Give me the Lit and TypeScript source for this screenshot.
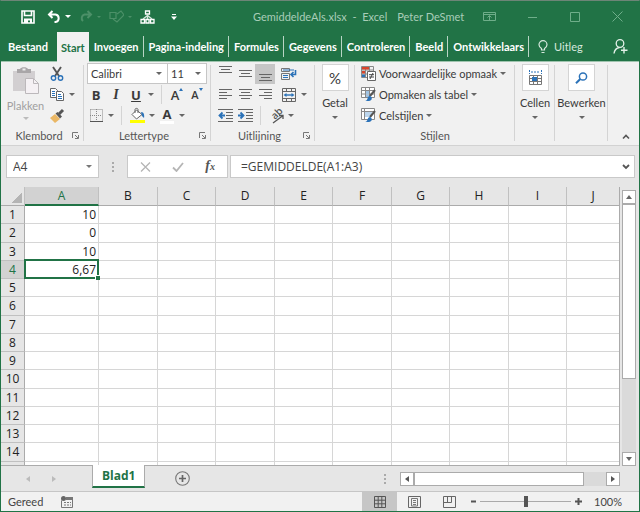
import { LitElement, html, svg, css, nothing, type TemplateResult } from "lit";
import { customElement, property } from "lit/decorators.js";
import { classMap } from "lit/directives/class-map.js";

const icon = (w: number, h: number, body: unknown) =>
  html`<svg width=${w} height=${h} viewBox="0 0 ${w} ${h}" fill="none" aria-hidden="true">${body}</svg>`;

const G = "#666";
const BLUE = "#2b72b8";

const icons = {
  save: icon(14, 14, svg`<path d="M1 1h12v12H1z M3.5 1v4.5h7V1" stroke="#fff" stroke-width="1.6"/><path d="M3 8.5h8V13H9V10.5H7V13H3z" fill="#fff"/>`),
  undo: icon(14, 14, svg`<path d="M5.5 1 2 4.5 5.500 8M2 4.500H8.500A3.800 3.800 0 0 1 8.500 12H7.500" stroke="#fff" stroke-width="2"/>`),
  redo: icon(14, 14, svg`<path d="M8.5 1 12 4.5 8.500 8M12 4.500H5.500A3.800 3.800 0 0 0 4 11" stroke="#4c9068" stroke-width="2"/>`),
  shapes: icon(15, 14, svg`<path d="M1 2.500h6v6H1zM8 4l4-3 3 4-7 7-4-3" stroke="#4c9068" stroke-width="1.200"/>`),
  tree: icon(15, 14, svg`<path d="M5.500 1h4v3h-4zM1 9.500h3.500V13H1zM6 9.500h3V13H6zM10.500 9.500H14V13h-3.500z" stroke="#fff" stroke-width="1.300"/><path d="M7.500 4v5M7.500 5.500 3 9M7.500 5.500 12 9" stroke="#d5e6dc" stroke-width="1.400"/>`),
  custom: icon(6, 8, svg`<path d="M1 1.500h4" stroke="#fff"/><path d="M0 3.500h6L3 7z" fill="#fff"/>`),
  ribbonMode: icon(13, 11, svg`<path d="M.5 1.500h12v8H.5zM.5 3.500h12M6.500 9V5M4.500 6.500l2-2 2 2" stroke="#6fae8a"/>`),
  min: icon(10, 10, svg`<path d="M0 5.500h9" stroke="#6fae8a"/>`),
  max: icon(10, 10, svg`<path d="M.5.5h9v9h-9z" stroke="#6fae8a"/>`),
  close: icon(11, 11, svg`<path d="M.5.5l10 10M10.500.5l-10 10" stroke="#6fae8a"/>`),
  bulb: icon(10, 14, svg`<path d="M3.500 10V8.500C1.500 7 1 6 1 4.700a4 4 0 0 1 8 0C9 6 8.500 7 6.500 8.500V10zM3.500 12.500h3" stroke="#d6e8dd" stroke-width="1.200"/>`),
  person: icon(15, 15, svg`<circle cx="7" cy="4.500" r="3.800" stroke="#e3f0e8" stroke-width="1.300"/><path d="M1 14.500C1.500 11 3.500 9 6.500 8.500M11 8v6.500M8 11.300h6.500" stroke="#e3f0e8" stroke-width="1.400"/>`),
  paste: icon(28, 28, svg`<path d="M1 4h22v20H1z" fill="#d2cfd1"/><path d="M5 2h3c1-2.500 7-2.500 8 0h3v4H5z" fill="#a9a6a8"/><rect x="10.500" y="1.500" width="3" height="2" fill="#eee"/><path d="M13.500 11.500h8l5 5v10h-13z" fill="#f5f1f4" stroke="#bcb8bb"/><path d="M21.500 11.500v5h5" stroke="#bcb8bb"/>`),
  cut: icon(14, 14, svg`<path d="M3 0l6 9M11 0 5 9" stroke="#555" stroke-width="1.900"/><circle cx="3.500" cy="11" r="2.200" stroke="${BLUE}" stroke-width="1.400"/><circle cx="10.500" cy="11" r="2.200" stroke="${BLUE}" stroke-width="1.400"/>`),
  copy: icon(14, 13, svg`<path d="M.5.5h5l2 2v7h-7z" fill="#fff" stroke="#666"/><path d="M2 3.500h3M2 5.500h3M2 7.500h3" stroke="${BLUE}"/><path d="M6.500 3.500h5l2 2v7h-7z" fill="#fff" stroke="#666"/><path d="M8 6.500h3M8 8.500h4M8 10.500h4" stroke="${BLUE}"/>`),
  brush: icon(14, 14, svg`<path d="M5 5l5 5-5 4-5-5z" fill="#eab765"/><path d="M5.500 4.500 7.500 3l4.500 4.500-2 2z" fill="#555"/><path d="M9 5l4-4" stroke="#555" stroke-width="3"/>`),
  borders: icon(13, 13, svg`<path d="M.5.5h12v12M.5.5v12M6.500 0v12M0 6.500h12" stroke="#888" stroke-dasharray="1 1"/><path d="M0 12.500h13" stroke="#555"/>`),
  bucket: icon(15, 15, svg`<path d="M6.500 2 12 6.500 6.500 11 2 6.500z" fill="#fff" stroke="#666"/><path d="M5 5V1.500C5 0 8 0 8 1.500V5" stroke="#666"/><path d="M11 4c3 0 3.500 3 3 6l-2-2z" fill="${BLUE}"/><path d="M0 12h15v3H0z" fill="#ff0"/>`),
  wrap: icon(16, 14, svg`<path d="M.5 1.500h8v3h-8zM.5 6.500h8v6h-8z" stroke="#777"/><path d="M2 3h11M2 8.500h5M2 10.500h5" stroke="${BLUE}"/><path d="M14.500 3v4.500H10M12.500 5 10 7.500 12.500 10" stroke="${BLUE}" stroke-width="1.600"/>`),
  merge: icon(14, 14, svg`<path d="M.5.5h13v13H.5zM0 3.500h14M0 10.500h14M4.500.5v3M9.500.5v3M4.500 10.500v3M9.500 10.500v3" stroke="#666"/><path d="M3 7h8" stroke="${BLUE}" stroke-width="1.400"/><path d="M1.500 7 4.500 5v4zM12.500 7l-3-2v4z" fill="${BLUE}"/>`),
  outdent: icon(15, 13, svg`<path d="M0 .5h15M8 3.500h7M8 6.500h7M8 9.500h7M0 12.500h15" stroke="${G}"/><path d="M2 6.500h5M4.500 3.500l-3 3 3 3" stroke="${BLUE}" stroke-width="1.800"/>`),
  indent: icon(15, 13, svg`<path d="M0 .5h15M8 3.500h7M8 6.500h7M8 9.500h7M0 12.500h15" stroke="${G}"/><path d="M0 6.500h5M2.500 3.500l3 3-3 3" stroke="${BLUE}" stroke-width="1.800"/>`),
  orient: icon(18, 18, svg`<text x="0" y="0" font-size="10" font-weight="600" font-family="Open Sans, sans-serif" fill="#555" transform="translate(8 13) rotate(-45)">ab</text><path d="M6 16 15.500 9M12 8.500h4V12" stroke="#555" stroke-width="1.300"/>`),
  cond: icon(15, 15, svg`<path d="M.5.5h12v11H.5zM4.500.5v11M8.500.5v11M.5 4h12M.5 8h12" stroke="#888"/><path d="M1 1h7v2.500H1zM1 5h3v2.500H1z" fill="#d8452b"/><path d="M1 8.500h3V11H1z" fill="${BLUE}"/><path d="M6.500 5.500h8v9h-8z" fill="#fff" stroke="#666"/><path d="M8 8.700h5M8 11h5M12 7l-3 6" stroke="#444"/>`),
  table: icon(15, 15, svg`<path d="M.5.500h13v10H.5zM4.500.5v10M8.500.5v10M.5 3.500h13M.5 7h13" fill="#fff" stroke="#888"/><path d="M5 4h3v3H5zM5 7.500h3V10H5z" fill="#9fc3e4"/><path d="M14 3 9 9" stroke="#555" stroke-width="2"/><path d="M4 14c3 0 2-5 5-5 3 1 2 5-1 5z" fill="${BLUE}"/>`),
  styles: icon(15, 15, svg`<path d="M.5.500h13v11H.5zM.5 3.500h13M3.500.5v11" fill="#fff" stroke="#888"/><path d="M4 4h7v5H4z" fill="#bcd5ec"/><path d="M14 3 9 9" stroke="#555" stroke-width="2"/><path d="M4 14c3 0 2-5 5-5 3 1 2 5-1 5z" fill="${BLUE}"/>`),
  cells: icon(15, 16, svg`<path d="M1.500 0v4M13.500 0v4M3 2h9" stroke="${BLUE}" stroke-dasharray="2 1"/><path d="M1.500 5.500h12v9h-12zM1.500 8.500h12M1.500 11.500h12M5.500 5.500v9M9.500 5.500v9" fill="#fff" stroke="#777"/><path d="M4 7h5v4H4z" fill="${BLUE}"/>`),
  find: icon(13, 12, svg`<circle cx="8" cy="4.500" r="3.600" stroke="${BLUE}" stroke-width="1.500"/><path d="M5.300 7 1 11.300" stroke="${BLUE}" stroke-width="2"/>`),
  launcher: icon(7, 7, svg`<path d="M.5 6V.5H6M3 3l3 3M6.500 3v3.500H3" stroke="#777"/>`),
  collapse: icon(8, 6, svg`<path d="M1 4.500 4 1.500l3 3" stroke="#555" stroke-width="1.600"/>`),
  cancel: icon(11, 10, svg`<path d="M1 .5l9 9M10 .5l-9 9" stroke="#b5b5b5" stroke-width="1.300"/>`),
  accept: icon(12, 10, svg`<path d="M1 5.500 4.500 9 11 1" stroke="#b5b5b5" stroke-width="1.800"/>`),
  chevron: icon(8, 6, svg`<path d="M1 1l3 3 3-3" stroke="#555" stroke-width="1.800"/>`),
  add: icon(15, 15, svg`<circle cx="7.500" cy="7.500" r="6.800" stroke="#777" stroke-width="1.100"/><path d="M7.500 4v7M4 7.500h7" stroke="#666" stroke-width="1.700"/>`),
  macro: icon(12, 12, svg`<path d="M.5 4.500v7h11v-10H5" stroke="#777"/><path d="M5 1h7v3H5z" fill="#777"/><path d="M3 6.500h7M3 9h7" stroke="#777" stroke-dasharray="2 1"/><circle cx="2.500" cy="2.500" r="2.500" fill="#666"/>`),
  normal: icon(12, 12, svg`<path d="M.5.5h11v11H.5zM4.200.5v11M7.800.5v11M.5 4.200h11M.5 7.800h11" stroke="#555"/>`),
  page: icon(13, 12, svg`<path d="M.5.5h12v11H.5z" stroke="#666"/><path d="M3.500 2.500h6v7.500h-6zM5 4.500h3M5 6.500h3M5 8.500h3" stroke="#777"/>`),
  breaks: icon(13, 12, svg`<path d="M.5.5h12v11H.5zM4.500.5v6M8.500.5v6H.5" stroke="#666"/>`),
  minus: icon(7, 7, svg`<path d="M1 3.500h5" stroke="#555" stroke-width="2"/>`),
  plus: icon(7, 7, svg`<path d="M0 3.500h7M3.500 0v7" stroke="#555" stroke-width="2"/>`),
};

const lines = (align: "left" | "center" | "right", widths: number[], top = 2) =>
  icon(13, 15, widths.map((w, i) => {
    const x = align === "left" ? 0 : align === "right" ? 13 - w : (13 - w) / 2;
    return svg`<path d="M${x} ${top + i * 3 + 0.5}h${w}" stroke=${G}/>`;
  }));

const caret = html`<i class="caret"></i>`;

@customElement("tool-button")
class ToolButton extends LitElement {
  @property() label = "";
  @property({ type: Boolean, reflect: true }) narrow = false;
  @property({ type: Boolean, reflect: true }) active = false;
  static styles = css`
    :host { display: flex; width: 20px; height: 20px; }
    :host([narrow]) { width: 10px; }
    :host([active]) { background: #c6c6c6; }
    button { all: unset; flex: 1; display: flex; align-items: center; justify-content: center; }
  `;
  render() {
    return html`<button aria-label=${this.label}><slot></slot></button>`;
  }
}

@customElement("ribbon-bar")
class RibbonBar extends LitElement {
  static styles = css`
    :host { display: flex; background: #f1f1f1; border-bottom: 1px solid #d2d2d2; color: #3a3a3a; padding-top: 1px; }
    button, select { all: unset; box-sizing: border-box; white-space: nowrap; }
    svg { display: block; flex: none; overflow: visible; }
    .group { display: flex; flex-direction: column; box-sizing: border-box; flex: none; position: relative; }
    .group::after { content: ""; position: absolute; right: 0; top: 2px; bottom: 4px; width: 1px; background: #d4d4d4; }
    .body { display: flex; height: 63px; }
    .name { display: flex; align-items: center; height: 19px; padding: 0 5px; color: #555; }
    .name span { flex: 1; text-align: center; }
    .clip { width: 83px; }
    .font { width: 127px; }
    .align { width: 104px; }
    .styles { width: 160px; }
    .single { width: 40px; }
    .edit { width: 53px; }
    .caret { border: 3px solid transparent; border-top-color: #666; border-bottom: 0; }
    .paste { display: flex; flex-direction: column; align-items: center; width: 46px; padding: 4px 0 0 3px; color: #a0a0a0; line-height: 18px; gap: 2px; }
    .paste .caret { border-top-color: #bbb; }
    .stack { display: flex; flex-direction: column; }
    .row { display: flex; align-items: center; height: 21px; }
    .stack.pad { padding-left: 2px; }
    .stack.arrange { padding-left: 4px; }
    .sep { width: 1px; height: 19px; margin: 0 5px; background: #d4d4d4; }
    .gap { margin-left: 4px; }
    .fields { padding-left: 1px; }
    .field { display: flex; align-items: center; position: relative; height: 21px; background: #fff; border: 1px solid #c6c6c6; box-sizing: border-box; }
    .field + .field { border-left: 0; }
    .field select { width: 100%; padding-left: 3px; line-height: 19px; }
    .field .caret { position: absolute; right: 5px; top: 8px; }
    .family { width: 81px; }
    .size { width: 39px; }
    .letter { font-family: "Open Sans", sans-serif; font-size: 13px; font-weight: 700; line-height: 18px; }
    .serif { font-family: "Liberation Serif", serif; font-style: italic; font-size: 14px; }
    .under { text-decoration: underline; }
    .medium { font-weight: 600; }
    .small { font-size: 11px; }
    .up, .down { align-self: flex-start; margin-top: 3px; border: 2px solid transparent; }
    .up { border-bottom: 3px solid #2b72b8; border-top: 0; }
    .down { border-top: 3px solid #2b72b8; border-bottom: 0; }
    .ink { border-bottom: 3px solid #fff; padding: 0 3px; line-height: 13px; }
    .big { display: flex; flex-direction: column; align-items: center; width: 100%; padding-top: 1px; }
    .tile { display: flex; align-items: center; justify-content: center; width: 27px; height: 27px; box-sizing: border-box; background: #fff; border: 1px solid #d4d4d4; font-size: 15px; margin-bottom: 3px; }
    .big .caret { margin-top: 4px; }
    .big .text { line-height: 18px; }
    .style { display: flex; align-items: center; gap: 3px; padding-left: 6px; height: 21px; }
    .end { margin-left: auto; padding: 0 9px 5px 0; display: flex; align-items: flex-end; }
  `;
  private tile(cls: string, text: string, pic: unknown) {
    return html`<div class="group ${cls}">
      <button class="big"><span class="tile">${pic}</span><span class="text">${text}</span>${caret}</button>
    </div>`;
  }
  private name(text: string, launcher = true) {
    return html`<div class="name"><span>${text}</span>${launcher ? html`<button aria-label="${text}: meer opties">${icons.launcher}</button>` : nothing}</div>`;
  }
  private tool(label: string, pic: unknown, menu = false, active = false) {
    return html`<tool-button label=${label} ?active=${active}>${pic}</tool-button>${menu
      ? html`<tool-button narrow label="${label}: opties">${caret}</tool-button>` : nothing}`;
  }
  render() {
    const t = this.tool;
    return html`
      <div class="group clip">
        <div class="body">
          <button class="paste">${icons.paste}<span>Plakken</span>${caret}</button>
          <div class="stack">
            <div class="row">${t("Knippen", icons.cut)}</div>
            <div class="row">${t("Kopiëren", icons.copy, true)}</div>
            <div class="row">${t("Opmaak kopiëren", icons.brush)}</div>
          </div>
        </div>
        ${this.name("Klembord")}
      </div>
      <div class="group font">
        <div class="body">
          <div class="stack pad">
            <div class="row fields">
              <label class="field family"><select aria-label="Lettertype"><option>Calibri</option></select>${caret}</label>
              <label class="field size"><select aria-label="Tekengrootte"><option>11</option></select>${caret}</label>
            </div>
            <div class="row">
              ${t("Vet", html`<b class="letter">B</b>`)}
              ${t("Cursief", html`<b class="letter serif">I</b>`)}
              ${t("Onderstrepen", html`<b class="letter under">U</b>`, true)}
              <i class="sep"></i>
              ${t("Groter", html`<span class="letter medium">A</span><i class="up"></i>`)}
              ${t("Kleiner", html`<span class="letter medium small">A</span><i class="down"></i>`)}
            </div>
            <div class="row">
              ${t("Randen", icons.borders, true)}
              <i class="sep"></i>
              ${t("Opvulkleur", icons.bucket, true)}
              ${t("Tekstkleur", html`<b class="letter ink">A</b>`, true)}
            </div>
          </div>
        </div>
        ${this.name("Lettertype")}
      </div>
      <div class="group align">
        <div class="body">
          <div class="stack arrange">
            <div class="row">
              ${t("Boven", lines("center", [13, 9, 13], 0))}
              ${t("Midden", lines("center", [13, 9, 13], 4))}
              ${t("Onder", lines("center", [13, 9, 13], 8), false, true)}
              <i class="gap"></i>${t("Terugloop", icons.wrap)}
            </div>
            <div class="row">
              ${t("Links", lines("left", [13, 8, 13, 8]))}
              ${t("Centreren", lines("center", [13, 9, 13, 9]))}
              ${t("Rechts", lines("right", [13, 8, 13, 8]))}
              <i class="gap"></i>${t("Samenvoegen", icons.merge, true)}
            </div>
            <div class="row">
              ${t("Inspringing verkleinen", icons.outdent)}
              ${t("Inspringing vergroten", icons.indent)}
              <i class="sep"></i>
              ${t("Stand", icons.orient, true)}
            </div>
          </div>
        </div>
        ${this.name("Uitlijning")}
      </div>
      ${this.tile("single", "Getal", "%")}
      <div class="group styles">
        <div class="body stack">
          <button class="style">${icons.cond}Voorwaardelijke opmaak${caret}</button>
          <button class="style">${icons.table}Opmaken als tabel${caret}</button>
          <button class="style">${icons.styles}Celstijlen${caret}</button>
        </div>
        ${this.name("Stijlen", false)}
      </div>
      ${this.tile("single", "Cellen", icons.cells)}
      ${this.tile("edit", "Bewerken", icons.find)}
      <button class="end" aria-label="Lint samenvouwen">${icons.collapse}</button>`;
  }
}

@customElement("sheet-grid")
class SheetGrid extends LitElement {
  @property({ attribute: false }) values: string[] = [];
  @property({ type: Number }) current = 0;
  static styles = css`
    :host { display: flex; background: #e6e6e6; font-family: "Open Sans", "Noto Sans", sans-serif; font-size: 12px; color: #222; }
    .area { flex: 1; background: #fff; border-right: 1px solid #ababab; border-bottom: 1px solid #ababab; }
    table { width: 100%; border-collapse: separate; border-spacing: 0; table-layout: fixed; }
    th, td { padding: 0; box-sizing: border-box; line-height: 16px; overflow: hidden; }
    .head { width: 24px; }
    .a { width: 74px; }
    .odd { width: 59px; }
    .even { width: 58px; }
    th { background: #e6e6e6; font-weight: 400; }
    thead th { height: 19px; border-bottom: 1px solid #ababab; border-right: 1px solid #c0c0c0; }
    thead th:last-child { border-right: 0; }
    tbody tr { height: 18px; }
    tbody tr:nth-child(4n + 2) { height: 19px; }
    tbody tr.rest { height: 3px; }
    tbody th { border-right: 1px solid #ababab; border-bottom: 1px solid #c0c0c0; }
    td { border-right: 1px solid #d6d6d6; border-bottom: 1px solid #d6d6d6; text-align: right; }
    td:last-child { border-right: 0; }
    tr.rest th, tr.rest td { border-bottom: 0; }
    td:nth-child(2) { padding-right: 2px; }
    thead th.on { background: #d2d2d2; color: #217346; border-bottom: 2px solid #217346; }
    tbody th.on { background: #d2d2d2; color: #217346; }
    td.cell { position: relative; overflow: visible; }
    td.cell::before { content: ""; position: absolute; inset: -2px -1px -1px -1px; border: 2px solid #217346; }
    td.cell::after { content: ""; position: absolute; right: -2px; bottom: -2px; width: 4px; height: 4px; background: #217346; border: 1px solid #fff; border-width: 1px 0 0 1px; }
    .corner::after { content: ""; display: block; margin: 3px 2px 0 auto; width: 11px; height: 11px; background: linear-gradient(135deg, transparent 50%, #b4b4b4 50%); }
    .bar { display: flex; flex-direction: column; width: 14px; margin: 3px 3px 0 2px; background: #dadada; }
    .bar button { all: unset; box-sizing: border-box; display: flex; align-items: center; justify-content: center; height: 14px; border: 1px solid #ababab; background: #fff; }
    .up, .down { border: 3px solid transparent; }
    .up { border-bottom: 4px solid #666; border-top: 0; }
    .down { border-top: 4px solid #666; border-bottom: 0; }
    .thumb { flex: 0 1 175px; box-sizing: border-box; border: 1px solid #ababab; background: #fff; }
    .room { flex: 1; }
  `;
  render() {
    const letters = [..."ABCDEFGHIJ"];
    return html`
      <div class="area"><table aria-label="Werkblad">
        <colgroup>
          <col class="head" /><col class="a" />
          ${letters.slice(1, -1).map((_, i) => html`<col class=${i % 2 ? "even" : "odd"} />`)}
          <col />
        </colgroup>
        <thead><tr>
          <th class="corner"></th>
          ${letters.map((l, i) => html`<th scope="col" class=${classMap({ on: i === 0 })}>${l}</th>`)}
        </tr></thead>
        <tbody>
          ${Array.from({ length: 14 }, (_, r) => html`<tr>
            <th scope="row" class=${classMap({ on: r === this.current })}>${r + 1}</th>
            ${letters.map((_, c) => html`<td class=${classMap({ cell: c === 0 && r === this.current })}>${c === 0 ? this.values[r] : nothing}</td>`)}
          </tr>`)}
          <tr class="rest"><th></th>${letters.map(() => html`<td></td>`)}</tr>
        </tbody>
      </table></div>
      <div class="bar">
        <button aria-label="Omhoog"><i class="up"></i></button>
        <div class="thumb"></div><div class="room"></div>
        <button aria-label="Omlaag"><i class="down"></i></button>
      </div>`;
  }
}

@customElement("app-root")
class AppRoot extends LitElement {
  static styles = css`
    :host { display: flex; flex-direction: column; min-height: 100vh; box-sizing: border-box; border: 1px solid #217346; border-top-color: #6d8577; background: #e6e6e6; font-family: Lato, "Open Sans", sans-serif; font-size: 11px; color: #444; }
    button, input { all: unset; box-sizing: border-box; white-space: nowrap; }
    svg { display: block; flex: none; }
    .title { display: flex; align-items: center; height: 31px; background: #217346; color: #a9cdb8; white-space: nowrap; }
    .quick { display: flex; align-items: center; padding-left: 20px; width: 252px; box-sizing: border-box; }
    .quick button { display: flex; align-items: center; }
    .quick .s { padding-left: 4px; }
    .quick .m { padding-left: 8px; }
    .quick .l { padding-left: 12px; }
    .quick .xl { padding-left: 16px; }
    .caret { border: 3px solid transparent; border-top-color: #fff; border-bottom: 0; }
    .dim .caret { border-width: 2px; border-top-color: #4c9068; border-bottom: 0; }
    .file { white-space: pre; }
    .user { margin-left: 10px; }
    .window { margin-left: auto; display: flex; align-items: center; gap: 32px; padding-right: 16px; }
    .tabs { display: flex; align-items: stretch; height: 29px; background: #217346; border-bottom: 1px solid #9fc4ae; color: #fff; font-weight: 700; }
    .tabs button { display: flex; align-items: center; padding: 0 5px; position: relative; }
    .tabs button.ruled::after { content: ""; position: absolute; right: 0; top: 4px; bottom: 4px; width: 1px; background: #b9d5c5; }
    .tabs .first { padding: 0 9px 0 7px; }
    .tabs .open { padding: 0 4px; margin-bottom: -1px; background: #f1f1f1; color: #217346; }
    .tabs .tell { gap: 6px; padding-left: 9px; font-weight: 400; color: #d6e8dd; }
    .tabs .share { margin-left: auto; padding-right: 11px; }
    .formula { display: flex; height: 23px; margin: 9px 4px 9px 5px; }
    .box { display: flex; align-items: center; background: #fff; border: 1px solid #c9c9c9; box-sizing: border-box; }
    .box button { display: flex; align-items: center; }
    .ref { width: 93px; padding: 0 6px; }
    .ref input { flex: 1; width: 0; }
    .ref .caret { border-top-color: #777; }
    .grip { width: 28px; display: flex; flex-direction: column; align-items: center; justify-content: center; gap: 2px; }
    .grip i { width: 2px; height: 2px; background: #aaa; }
    .entry { width: 101px; justify-content: space-between; padding: 0 12px; margin-right: 2px; }
    .box .fx { align-items: baseline; font: italic 700 14px/18px "Liberation Serif", serif; color: #555; }
    .fx small { font-size: 10px; }
    .text { flex: 1; padding: 0 4px 0 10px; }
    .text input, .ref input { font-family: "Open Sans", "Noto Sans", sans-serif; font-size: 12px; }
    .text input { flex: 1; }
    sheet-grid { flex: 1; }
    .sheets { display: flex; height: 25px; }
    .nav { display: flex; align-items: center; gap: 22px; padding: 0 0 0 25px; width: 91px; box-sizing: border-box; }
    .prev, .next { border: 3px solid transparent; display: block; }
    .prev { border-right: 4px solid #bbb; border-left: 0; }
    .next { border-left: 4px solid #bbb; border-right: 0; }
    .sheet { display: flex; align-items: center; height: 23px; margin-top: -1px; padding: 0 9px; background: #fff; border: 1px solid #ababab; border-top: 0; border-bottom: 2px solid #217346; color: #217346; font-family: "Open Sans", "Noto Sans", sans-serif; font-size: 12px; font-weight: 700; }
    .plus { padding: 0 30px; display: flex; align-items: center; }
    .hscroll { margin-left: auto; display: flex; align-items: center; width: 269px; padding-right: 19px; box-sizing: border-box; }
    .hscroll .grip { width: 30px; }
    .track { flex: 1; display: flex; height: 14px; background: #dadada; }
    .track button { width: 14px; border: 1px solid #ababab; background: #fff; display: flex; align-items: center; justify-content: center; }
    .track .prev { border-right-color: #555; }
    .track .next { border-left-color: #555; }
    .thumb { width: 170px; box-sizing: border-box; border: 1px solid #ababab; background: #fff; }
    .room { flex: 1; }
    .status { display: flex; align-items: stretch; height: 19px; border-top: 1px solid #c6c6c6; background: #f1f1f1; }
    .status > * { display: flex; align-items: center; }
    .ready { padding: 0 18px 0 7px; }
    .view { width: 35px; justify-content: center; }
    .view.on { background: #c6c6c6; }
    .views { margin-left: auto; }
    .views button { display: flex; height: 100%; align-items: center; }
    .zoom { gap: 3px; padding-left: 2px; }
    .step { display: flex; justify-content: center; width: 8px; }
    .zoom input { width: 91px; height: 14px; background: linear-gradient(#aaa, #aaa) center / 100% 1px no-repeat; }
    .zoom input::-webkit-slider-thumb { -webkit-appearance: none; width: 4px; height: 11px; background: #555; }
    .pct { width: 57px; box-sizing: border-box; padding-right: 17px; justify-content: flex-end; }
  `;
  private tab(text: string, cls = "ruled"): TemplateResult {
    return html`<button role="tab" class=${cls} aria-selected=${cls === "open"}>${text}</button>`;
  }
  render() {
    return html`
      <header class="title">
        <div class="quick">
          <button aria-label="Opslaan">${icons.save}</button>
          <button class="l" aria-label="Ongedaan maken">${icons.undo}</button>
          <button class="s" aria-label="Lijst ongedaan maken">${caret}</button>
          <button class="m" aria-label="Opnieuw">${icons.redo}</button>
          <button class="s dim" aria-label="Lijst opnieuw">${caret}</button>
          <button class="m" aria-label="Vormen">${icons.shapes}</button>
          <button class="s dim" aria-label="Lijst vormen">${caret}</button>
          <button class="m" aria-label="Hiërarchie">${icons.tree}</button>
          <button class="xl" aria-label="Werkbalk aanpassen">${icons.custom}</button>
        </div>
        <span class="file">GemiddeldeAls.xlsx  -  Excel</span>
        <span class="user">Peter DeSmet</span>
        <div class="window">
          <button aria-label="Weergave lint">${icons.ribbonMode}</button>
          <button aria-label="Minimaliseren">${icons.min}</button>
          <button aria-label="Maximaliseren">${icons.max}</button>
          <button aria-label="Sluiten">${icons.close}</button>
        </div>
      </header>
      <nav class="tabs" role="tablist">
        ${this.tab("Bestand", "first")}${this.tab("Start", "open")}
        ${["Invoegen", "Pagina-indeling", "Formules", "Gegevens", "Controleren", "Beeld", "Ontwikkelaars"].map((t) => this.tab(t))}
        <button class="tell">${icons.bulb}Uitleg</button>
        <button class="share" aria-label="Delen">${icons.person}</button>
      </nav>
      <ribbon-bar></ribbon-bar>
      <div class="formula">
        <div class="box ref"><input aria-label="Naamvak" .value=${"A4"} /><button aria-label="Namen">${caret}</button></div>
        <div class="grip"><i></i><i></i><i></i></div>
        <div class="box entry">
          <button aria-label="Annuleren">${icons.cancel}</button>
          <button aria-label="Invoeren">${icons.accept}</button>
          <button class="fx" aria-label="Functie invoegen">f<small>x</small></button>
        </div>
        <div class="box text"><input aria-label="Formulebalk" .value=${"=GEMIDDELDE(A1:A3)"} /><button aria-label="Uitvouwen">${icons.chevron}</button></div>
      </div>
      <sheet-grid .values=${["10", "0", "10", "6,67"]} .current=${3}></sheet-grid>
      <div class="sheets">
        <div class="nav"><button aria-label="Vorig blad"><i class="prev"></i></button><button aria-label="Volgend blad"><i class="next"></i></button></div>
        <button class="sheet">Blad1</button>
        <button class="plus" aria-label="Nieuw blad">${icons.add}</button>
        <div class="hscroll">
          <div class="grip"><i></i><i></i><i></i></div>
          <div class="track">
            <button aria-label="Naar links"><i class="prev"></i></button>
            <div class="thumb"></div><div class="room"></div>
            <button aria-label="Naar rechts"><i class="next"></i></button>
          </div>
        </div>
      </div>
      <footer class="status">
        <span class="ready">Gereed</span>
        <button aria-label="Macro opnemen">${icons.macro}</button>
        <div class="views">
          <button class="view on" aria-label="Normaal">${icons.normal}</button>
          <button class="view" aria-label="Pagina-indeling">${icons.page}</button>
          <button class="view" aria-label="Pagina-eindevoorbeeld">${icons.breaks}</button>
        </div>
        <div class="zoom">
          <button class="step" aria-label="Uitzoomen">${icons.minus}</button>
          <input type="range" aria-label="In- en uitzoomen" min="0" max="200" value="100" />
          <button class="step" aria-label="Inzoomen">${icons.plus}</button>
        </div>
        <span class="pct">100%</span>
      </footer>`;
  }
}
